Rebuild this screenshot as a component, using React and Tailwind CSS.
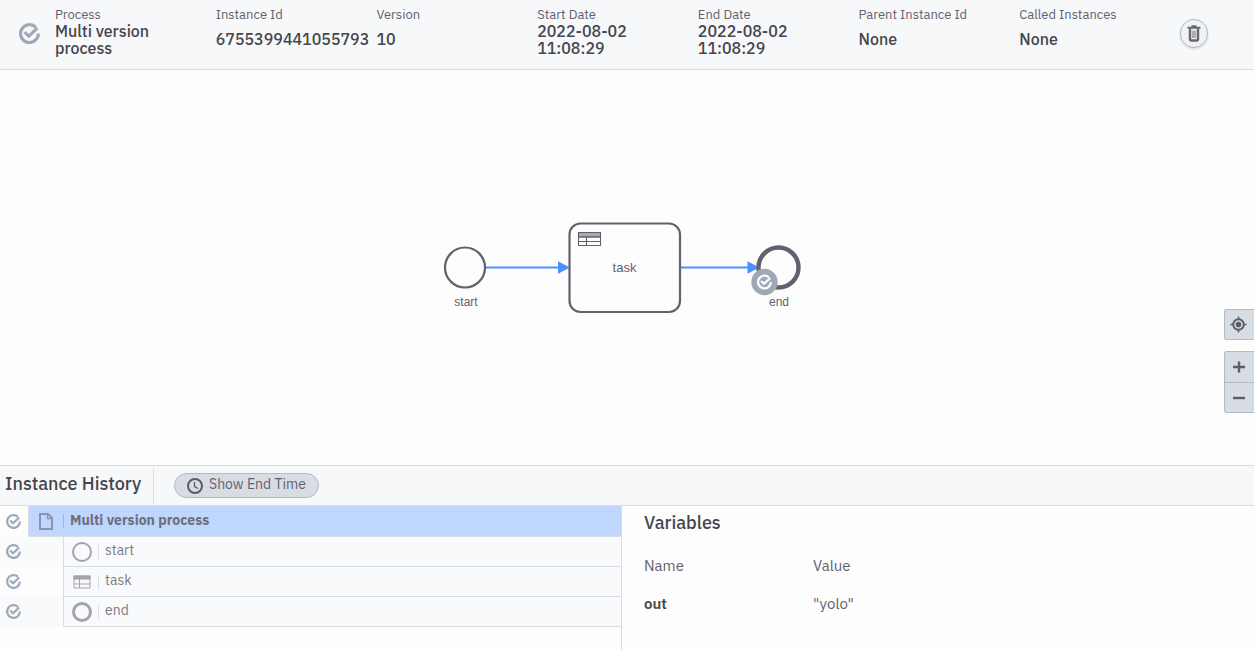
const facts = [
  { label: 'Process', value: 'Multi version process', wrap: true },
  { label: 'Instance Id', value: '6755399441055793' },
  { label: 'Version', value: '10' },
  { label: 'Start Date', value: '2022-08-02 11:08:29', wrap: true },
  { label: 'End Date', value: '2022-08-02 11:08:29', wrap: true },
  { label: 'Parent Instance Id', value: 'None' },
  { label: 'Called Instances', value: 'None' },
];

function CheckPaths() {
  return (
    <g fill="none" stroke="currentColor" strokeWidth="3">
      <path d="M15.9 3.9A8.5 8.5 0 1 0 18.5 10" />
      <path d="M5.4 8.6L9.4 12.4L17.6 4.6" />
    </g>
  );
}

function CheckIcon({ className }) {
  return (
    <svg viewBox="0 0 20 20" className={className} aria-hidden="true">
      <CheckPaths />
    </svg>
  );
}

function TableIcon({ className }) {
  return (
    <svg viewBox="0 0 18 14" className={className} fill="none" stroke="currentColor" aria-hidden="true">
      <rect x="1" y="1" width="16" height="3" fill="currentColor" />
      <path d="M1 1H17V13H1ZM1 9H17M6.5 4V13" />
    </svg>
  );
}

function Header() {
  return (
    <header className="flex h-[70px] shrink-0 items-center border-b border-[#d8dce3] bg-[#f7f8fa] pb-0.5 pr-[46px]">
      <CheckIcon className="ml-[19px] mr-[15px] h-[21px] w-[21px] shrink-0 text-[#9ea9b7]" />
      <dl className="grid h-full flex-1 grid-cols-7">
        {facts.map((f) => (
          <div key={f.label} className="flex min-w-0 flex-col pt-[6px]">
            <dt className="whitespace-nowrap text-[13px] leading-[17px]">{f.label}</dt>
            <dd className="flex h-[33px] items-center text-base font-medium leading-[17px] text-[#45464e]">
              <span className={f.wrap ? 'max-w-28' : 'whitespace-nowrap'}>{f.value}</span>
            </dd>
          </div>
        ))}
      </dl>
      <button
        type="button"
        aria-label="Delete instance"
        className="flex h-[29px] w-[28px] items-center justify-center rounded-full border border-[#b0bac9] bg-[#f1f2f5] text-[#66676d] shadow-sm"
      >
        <svg viewBox="0 0 14 18" className="h-[18px] w-[14px]" fill="none" stroke="currentColor" aria-hidden="true">
          <path d="M.5 2.8H13.5M4.5 1.3H9.500" strokeWidth="2" />
          <path d="M3 3.500V14Q3 15.500 4.500 15.500H9.500Q11 15.500 11 14V3.500" strokeWidth="2.400" />
          <path d="M6 5.500V13M8 5.500V13" strokeWidth="1" />
        </svg>
      </button>
    </header>
  );
}

function Diagram() {
  return (
    <section className="relative flex min-h-[395px] flex-1 items-center justify-center">
      <svg
        viewBox="0 0 374 97"
        className="h-[97px] w-[374px] font-['Liberation_Sans',Arial,sans-serif]"
        role="img"
        aria-label="Process diagram"
      >
        <g stroke="#4d90ff" strokeWidth="2.2">
          <path d="M46 48.5H119M241 48.5H308" />
          <path d="M118 42.3L130 48.5L118 54.7ZM307.5 42.3L319.5 48.5L307.5 54.7Z" fill="#4d90ff" stroke="none" />
        </g>
        <g fill="none" stroke="#62626e">
          <circle cx="25" cy="48.5" r="20" strokeWidth="2.2" />
          <rect x="129.500" y="4.5" width="110.500" height="88.5" rx="11" strokeWidth="2.2" />
          <circle cx="338.5" cy="48.5" r="20" strokeWidth="4.4" />
          <rect x="138.5" y="13.5" width="22" height="4.5" fill="#aaaaaa" />
          <path d="M138.5 13.5H160.5V26.5H138.5ZM138.5 18H160.5M138.5 22.5H160.5M146.5 18V26.5" strokeWidth="1.1" />
        </g>
        <g fill="#62626e" textAnchor="middle">
          <text x="26" y="87" fontSize="12">start</text>
          <text x="184.5" y="53" fontSize="13">task</text>
          <text x="339" y="87" fontSize="12">end</text>
        </g>
        <circle cx="324.5" cy="63" r="13.2" fill="#9ea9b7" />
        <g transform="translate(317 55.5) scale(.75)" className="text-white">
          <CheckPaths />
        </g>
      </svg>
      <div className="absolute bottom-[52px] right-0 flex w-[30px] flex-col text-[#5b5d64]">
        <button type="button" aria-label="Reset diagram zoom" className="mb-[11px] flex h-[31px] items-center justify-center rounded-l-[3px] border border-r-0 border-[#b0bac9] bg-[#d8dce3] pr-0.5">
          <svg viewBox="0 0 18 18" className="h-[17px] w-[17px]" fill="none" stroke="currentColor" aria-hidden="true">
            <circle cx="9" cy="9" r="5.6" strokeWidth="2" />
            <circle cx="9" cy="9" r="3" fill="currentColor" stroke="none" />
            <path d="M9 .5V4M9 14V17.5M.5 9H4M14 9H17.5" strokeWidth="1.6" />
          </svg>
        </button>
        <button type="button" aria-label="Zoom in diagram" className="flex h-[31px] items-center justify-center rounded-tl-[3px] border border-b-0 border-r-0 border-[#b0bac9] bg-[#d8dce3] pr-0.5">
          <svg viewBox="0 0 12 12" className="h-3 w-3" stroke="currentColor" strokeWidth="2.4" aria-hidden="true">
            <path d="M0 6H12M6 .5V11.5" />
          </svg>
        </button>
        <button type="button" aria-label="Zoom out diagram" className="flex h-[31px] items-center justify-center rounded-bl-[3px] border border-r-0 border-[#b0bac9] bg-[#d8dce3] pr-0.5">
          <svg viewBox="0 0 12 12" className="h-3 w-3" stroke="currentColor" strokeWidth="2.4" aria-hidden="true">
            <path d="M0 6H12" />
          </svg>
        </button>
      </div>
    </section>
  );
}

function EventIcon({ thick }) {
  return (
    <svg viewBox="0 0 20 20" className="h-5 w-5" fill="none" stroke="#a3a4aa" aria-hidden="true">
      <circle cx="10" cy="10" r={thick ? 8.5 : 9} strokeWidth={thick ? 3 : 2} />
    </svg>
  );
}

const nodes = [
  { name: 'start', icon: <EventIcon />, gutter: 'bg-[#f9fafc]' },
  { name: 'task', icon: <TableIcon className="h-[14px] w-[18px] text-[#a3a4aa]" />, gutter: '' },
  { name: 'end', icon: <EventIcon thick />, gutter: 'bg-[#f9fafc]' },
];

function History() {
  return (
    <ul className="w-[622px] border-r border-[#d8dce3] text-sm text-[#7c7d83]">
      <li className="flex h-[31px] items-stretch">
        <span className="flex w-[28px] items-center pl-[6px]">
          <CheckIcon className="h-[15px] w-[15px] text-[#9ea9b7]" />
        </span>
        <button type="button" className="flex flex-1 items-center border-b border-l border-[#d8dce3] bg-[#bfd6ff] font-bold text-[#6b707b]">
          <svg viewBox="0 0 14 17" className="ml-[10px] h-[17px] w-[14px]" fill="none" stroke="#8b95a9" strokeWidth="2" aria-hidden="true">
            <path d="M1 1H9L13 5V16H1Z" />
            <path d="M8.5 1V5.5H13" strokeWidth="1.4" />
          </svg>
          <span className="ml-[10px] h-[14px] w-px bg-[#a5b6d6]" />
          <span className="pb-0.5 pl-[6px]">Multi version process</span>
        </button>
      </li>
      {nodes.map((n) => (
        <li key={n.name} className={`flex h-[30px] items-stretch ${n.gutter}`}>
          <span className="flex w-[63px] items-center pb-0.5 pl-[6px]">
            <CheckIcon className="h-[15px] w-[15px] text-[#9ea9b7]" />
          </span>
          <button type="button" className="flex flex-1 items-center border-b border-l border-[#d8dce3] bg-[#f9fafc]">
            <span className="ml-2 flex w-5 justify-center">{n.icon}</span>
            <span className="ml-[6px] h-[14px] w-px bg-[#d8dce3]" />
            <span className="pb-[3px] pl-[6px]">{n.name}</span>
          </button>
        </li>
      ))}
    </ul>
  );
}

function Variables() {
  return (
    <section className="flex-1 pl-[22px] pt-[7px]">
      <h2 className="text-lg font-medium leading-5 text-[#45464e]">Variables</h2>
      <table className="mt-[14px] text-left text-[15px]">
        <thead>
          <tr className="h-[38px]">
            <th className="w-[169px] font-normal">Name</th>
            <th className="font-normal">Value</th>
          </tr>
        </thead>
        <tbody>
          <tr className="h-[38px]">
            <td className="font-semibold text-[#45464e]">out</td>
            <td>"yolo"</td>
          </tr>
        </tbody>
      </table>
    </section>
  );
}

export default function App() {
  return (
    <main className="flex min-h-screen flex-col bg-[#fdfdfe] font-['IBM_Plex_Sans','Roboto',sans-serif] text-[#62626e]">
      <Header />
      <Diagram />
      <section className="flex min-h-[185px] flex-col border-t border-[#d8dce3]">
        <div className="flex h-10 items-center border-b border-[#d8dce3] bg-[#f7f8fa] pl-[5px]">
          <h2 className="flex h-9 w-[149px] items-center border-r border-[#d8dce3] pb-[3px] text-lg font-medium text-[#45464e]">Instance History</h2>
          <button type="button" className="ml-5 flex h-[25px] items-center gap-[6px] rounded-full border border-[#b0bac9] bg-[#d8dce3] px-3 text-sm">
            <svg viewBox="0 0 16 16" className="h-4 w-4" fill="none" stroke="#5b5d64" aria-hidden="true">
              <circle cx="8" cy="8" r="7" strokeWidth="2" />
              <path d="M7.5 4V8.5L11 10.5" strokeWidth="1.3" />
            </svg>
            <span className="pb-[3px]">Show End Time</span>
          </button>
        </div>
        <div className="flex flex-1">
          <History />
          <Variables />
        </div>
      </section>
    </main>
  );
}
